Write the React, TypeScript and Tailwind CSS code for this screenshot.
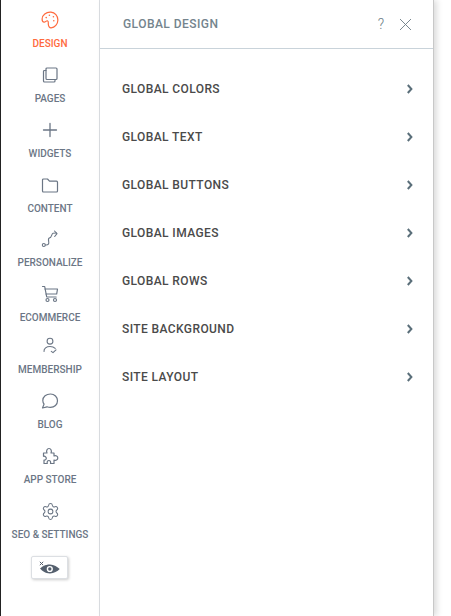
import { ReactNode } from "react";
import { Settings } from "lucide-react";

// nav icons are drawn on the same 18px box
function Icon({ children, sw = 1.1 }: { children: ReactNode; sw?: number }) {
  return (
    <svg width="18" height="18" viewBox="0 0 18 18" fill="none" stroke="currentColor" strokeWidth={sw} strokeLinecap="round" strokeLinejoin="round">
      {children}
    </svg>
  );
}

const Palette = () => (
  <Icon sw={1.2}>
    <path d="M9.800 1.200C5.200.9 1.200 3.800 1.100 8c0 1.900.8 3.200 2 3.200 1.600 0 2.100-1.700 3.400-1.400 1.300.3.700 2 .8 3.400.1 2 1.200 3.700 2.800 3.600 3.600-.2 6.800-3.700 6.800-7.700 0-4.200-3-7.600-6.900-7.900z" />
    <circle cx="5.200" cy="6.600" r=".8" fill="currentColor" stroke="none" />
    <circle cx="8.400" cy="4.300" r=".8" fill="currentColor" stroke="none" />
    <circle cx="12.400" cy="5.800" r=".8" fill="currentColor" stroke="none" />
    <circle cx="12.800" cy="9.800" r=".8" fill="currentColor" stroke="none" />
  </Icon>
);

const Pages = () => (
  <Icon sw={1.2}>
    <rect x="5" y="2" width="11" height="11.500" rx="1" />
    <path d="M5 4.500H3.500a1 1 0 0 0-1 1V15a1 1 0 0 0 1 1H13a1 1 0 0 0 1-1v-1.500" />
  </Icon>
);

const PlusIcon = () => (
  <Icon sw={1.300}>
    <path d="M9 2.500v13M2.500 9h13" />
  </Icon>
);

const FolderIcon = () => (
  <Icon sw={1.2}>
    <path d="M1.500 4a1 1 0 0 1 1-1h4l2 2.200h7a1 1 0 0 1 1 1V15a1 1 0 0 1-1 1h-13a1 1 0 0 1-1-1z" />
  </Icon>
);

const RouteIcon = () => (
  <Icon sw={1.1}>
    <circle cx="2.800" cy="15" r="1.500" />
    <path d="M4.300 15c3.300.3 3.800-1.300 3.400-3.300-.5-2.300-.8-3.500 1-3.900 2 0 1.800-4.300 3.300-4.600 1-.2 2.300-.2 3.500-.2" />
    <path d="M13.500 1l2.500 2.700-2.300 2.800" />
  </Icon>
);

const Cart = () => (
  <Icon sw={1.2}>
    <path d="M1.500 1.500h2.200l2 10.500h9.500" />
    <path d="M4 4h12.500l-.8 5H5" />
    <circle cx="6.500" cy="15" r="1.500" />
    <circle cx="14" cy="15" r="1.500" />
  </Icon>
);

const Member = () => (
  <Icon sw={1.1}>
    <circle cx="9" cy="4.200" r="2.900" />
    <path d="M3 14.500c-.3-3 2.500-5 6-5 2.300 0 4 .6 5.200 1.800" />
    <path d="M10.300 14.300l1.700 1.400 3-2.800" />
  </Icon>
);

const Bubble = () => (
  <Icon sw={1.2}>
    <path d="M9.500 2C5.200 2 1.800 4.700 1.800 8.500c0 1.500.5 2.700 1.300 3.600L1.500 16l4.500-1.200c1 .4 2.200.6 3.500.6 4 0 7-2.900 7-6.600S13.500 2 9.500 2z" />
  </Icon>
);

const PuzzleIcon = () => (
  <Icon sw={1.2}>
    <path d="M2.500 6H6C5 3.800 6 1.500 8 1.500S11 3.800 10 6h3v3c2-.8 3.800.2 3.800 2s-1.800 2.800-3.800 2v3.500H9.500c.5-1.800-.3-3-1.600-3s-2.100 1.200-1.600 3H3v-3.500c1.400.2 2.300-.6 2.300-1.700S4 8.800 2.500 9.300z" />
  </Icon>
);

const Eye = () => (
  <svg width="21" height="13" viewBox="0 0 21 13">
    <path d="M.8.800l3.400 3.400M4.200.8L.8 4.200" stroke="#55606e" strokeWidth="1" fill="none" />
    <path d="M1 7.500C3 6 5.500 3.500 11 3.500c4 0 7.500 2.500 9.700 4.500-2.200 2.200-5.700 4.500-9.700 4.500-4.800 0-8-3-10-5z" fill="#55606e" />
    <circle cx="10.800" cy="8" r="3.100" fill="#fff" />
    <circle cx="10.800" cy="8" r="1.700" fill="#55606e" />
  </svg>
);

const navItems: { label: string; icon: ReactNode; h: string; active?: boolean }[] = [
  { label: "DESIGN", icon: <Palette />, h: "h-[55px]", active: true },
  { label: "PAGES", icon: <Pages />, h: "h-[55px]" },
  { label: "WIDGETS", icon: <PlusIcon />, h: "h-[55px]" },
  { label: "CONTENT", icon: <FolderIcon />, h: "h-[54px]" },
  { label: "PERSONALIZE", icon: <RouteIcon />, h: "h-[55px]" },
  { label: "ECOMMERCE", icon: <Cart />, h: "h-[52px]" },
  { label: "MEMBERSHIP", icon: <Member />, h: "h-[55px]" },
  { label: "BLOG", icon: <Bubble />, h: "h-[55px]" },
  { label: "APP STORE", icon: <PuzzleIcon />, h: "h-[55px]" },
  { label: "SEO & SETTINGS", icon: <Settings size={19} strokeWidth={1.300} />, h: "h-[55px]" },
];

const rows = [
  "GLOBAL COLORS",
  "GLOBAL TEXT",
  "GLOBAL BUTTONS",
  "GLOBAL IMAGES",
  "GLOBAL ROWS",
  "SITE BACKGROUND",
  "SITE LAYOUT",
];

export default function App() {
  return (
    <div className="flex h-[616px] w-[451px] overflow-hidden bg-white font-['Roboto',sans-serif]">
      <div className="w-px shrink-0 bg-[#222222]" />
      {/* left nav */}
      <div className="flex w-[99px] shrink-0 flex-col items-stretch border-r border-[#dcdfe3] pt-[11px]">
        {navItems.map((item) => (
          <div
            key={item.label}
            className={`flex shrink-0 flex-col items-center ${item.h} ${item.active ? "text-[#ff6a3d]" : "text-[#6b7685]"}`}
          >
            <div className="flex h-[18px] items-center justify-center">{item.icon}</div>
            <span className="mt-[9px] text-[10px] leading-[12px] font-medium whitespace-nowrap">
              {item.label}
            </span>
          </div>
        ))}
        <div className="mt-[-1px] mr-px flex justify-center">
          <div className="flex h-[23px] w-[37px] items-center justify-center rounded-[2px] border border-[#dcdfe3] bg-white shadow-[1px_1px_3px_rgba(0,0,0,0.2)]">
            <Eye />
          </div>
        </div>
      </div>
      {/* panel */}
      <div className="flex w-[334px] shrink-0 flex-col border-r border-[#c8c8c8] shadow-[3px_0_6px_rgba(0,0,0,0.14)]">
        <div className="flex h-[49px] shrink-0 items-center justify-between border-b border-[#c9d3da] pr-[21px] pl-[23px]">
          <span className="text-[12px] font-medium tracking-[0.45px] text-[#74848d]">GLOBAL DESIGN</span>
          <div className="flex items-center gap-[15px] text-[#6b7c85]">
            <span className="text-[14px] leading-none font-light">?</span>
            <svg width="13" height="13" viewBox="0 0 13 13" fill="none" stroke="currentColor" strokeWidth="0.9">
              <path d="M1 1l11 11M12 1L1 12" />
            </svg>
          </div>
        </div>
        <div className="flex flex-col pt-[16px]">
          {rows.map((r) => (
            <div key={r} className="flex h-[48px] items-center justify-between pr-[19px] pl-[22px]">
              <span className="text-[12px] font-medium tracking-[0.4px] text-[#4a4a4a]">{r}</span>
              <svg width="8" height="10" viewBox="0 0 8 10" fill="none" stroke="#5b6f7a" strokeWidth="2">
                <path d="M1.800 1l3.600 4-3.600 4" />
              </svg>
            </div>
          ))}
        </div>
      </div>
    </div>
  );
}
